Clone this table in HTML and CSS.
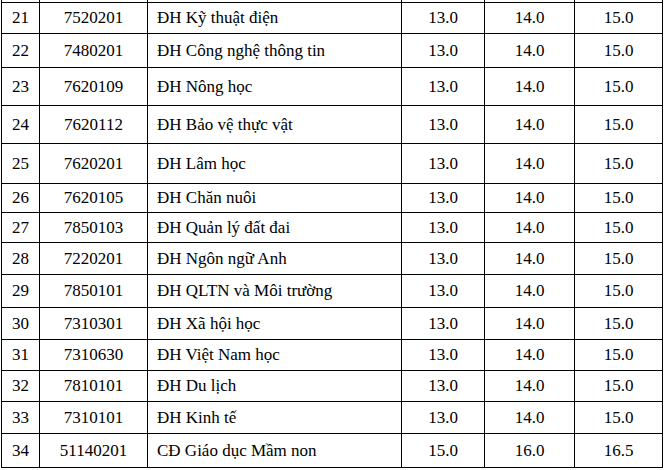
FILE: index.html
```html
<!DOCTYPE html>
<html lang="vi">
<head>
<meta charset="utf-8">
<title>Điểm chuẩn</title>
<link rel="stylesheet" href="styles.css">
</head>
<body>
<div class="wrap">
<table class="scores">
  <colgroup>
    <col class="c-stt">
    <col class="c-code">
    <col class="c-name">
    <col class="c-a">
    <col class="c-b">
    <col class="c-c">
  </colgroup>
  <tbody>
    <tr class="cut"><td></td><td></td><td></td><td></td><td></td><td></td></tr>
    <tr class="h31"><td>21</td><td>7520201</td><td class="name">ĐH Kỹ thuật điện</td><td>13.0</td><td>14.0</td><td>15.0</td></tr>
    <tr class="h34"><td>22</td><td>7480201</td><td class="name">ĐH Công nghệ thông tin</td><td>13.0</td><td>14.0</td><td>15.0</td></tr>
    <tr class="h38"><td>23</td><td>7620109</td><td class="name">ĐH Nông học</td><td>13.0</td><td>14.0</td><td>15.0</td></tr>
    <tr class="h38"><td>24</td><td>7620112</td><td class="name">ĐH Bảo vệ thực vật</td><td>13.0</td><td>14.0</td><td>15.0</td></tr>
    <tr class="h40"><td>25</td><td>7620201</td><td class="name">ĐH Lâm học</td><td>13.0</td><td>14.0</td><td>15.0</td></tr>
    <tr class="h29"><td>26</td><td>7620105</td><td class="name">ĐH Chăn nuôi</td><td>13.0</td><td>14.0</td><td>15.0</td></tr>
    <tr class="h30"><td>27</td><td>7850103</td><td class="name">ĐH Quản lý đất đai</td><td>13.0</td><td>14.0</td><td>15.0</td></tr>
    <tr class="h32"><td>28</td><td>7220201</td><td class="name">ĐH Ngôn ngữ Anh</td><td>13.0</td><td>14.0</td><td>15.0</td></tr>
    <tr class="h33"><td>29</td><td>7850101</td><td class="name">ĐH QLTN và Môi trường</td><td>13.0</td><td>14.0</td><td>15.0</td></tr>
    <tr class="h32"><td>30</td><td>7310301</td><td class="name">ĐH Xã hội học</td><td>13.0</td><td>14.0</td><td>15.0</td></tr>
    <tr class="h31"><td>31</td><td>7310630</td><td class="name">ĐH Việt Nam học</td><td>13.0</td><td>14.0</td><td>15.0</td></tr>
    <tr class="h31"><td>32</td><td>7810101</td><td class="name">ĐH Du lịch</td><td>13.0</td><td>14.0</td><td>15.0</td></tr>
    <tr class="h32"><td>33</td><td>7310101</td><td class="name">ĐH Kinh tế</td><td>13.0</td><td>14.0</td><td>15.0</td></tr>
    <tr class="h34"><td>34</td><td>51140201</td><td class="name">CĐ Giáo dục Mầm non</td><td>15.0</td><td>16.0</td><td>16.5</td></tr>
  </tbody>
</table>
</div>
</body>
</html>
```

FILE: styles.css
```css
html, body {
  margin: 0;
  padding: 0;
  background: #ffffff;
}

.wrap {
  padding-left: 1px;
}

.scores {
  border-collapse: collapse;
  table-layout: fixed;
  width: 661px;
  font-family: "Liberation Serif", Tinos, "Times New Roman", "Nimbus Roman", "DejaVu Serif", serif;
  font-size: 17px;
  color: #000000;
}

.c-stt { width: 38px; }
.c-code { width: 108px; }
.c-name { width: 254px; }
.c-a { width: 83px; }
.c-b { width: 90px; }
.c-c { width: 88px; }

.scores td {
  font-family: "Liberation Serif", Tinos, "Times New Roman", "Nimbus Roman", "DejaVu Serif", serif;
  border: 1px solid #000000;
  padding: 0;
  text-align: center;
  vertical-align: middle;
  white-space: nowrap;
  overflow: hidden;
  line-height: 20px;
}

.scores td.name {
  text-align: left;
  padding-left: 9px;
}

.scores tr.cut td {
  border-top: none;
  height: 2px;
  line-height: 0;
}

.h29 { height: 29px; }
.h30 { height: 30px; }
.h31 { height: 31px; }
.h32 { height: 32px; }
.h33 { height: 33px; }
.h34 { height: 34px; }
.h38 { height: 38px; }
.h40 { height: 40px; }
```
